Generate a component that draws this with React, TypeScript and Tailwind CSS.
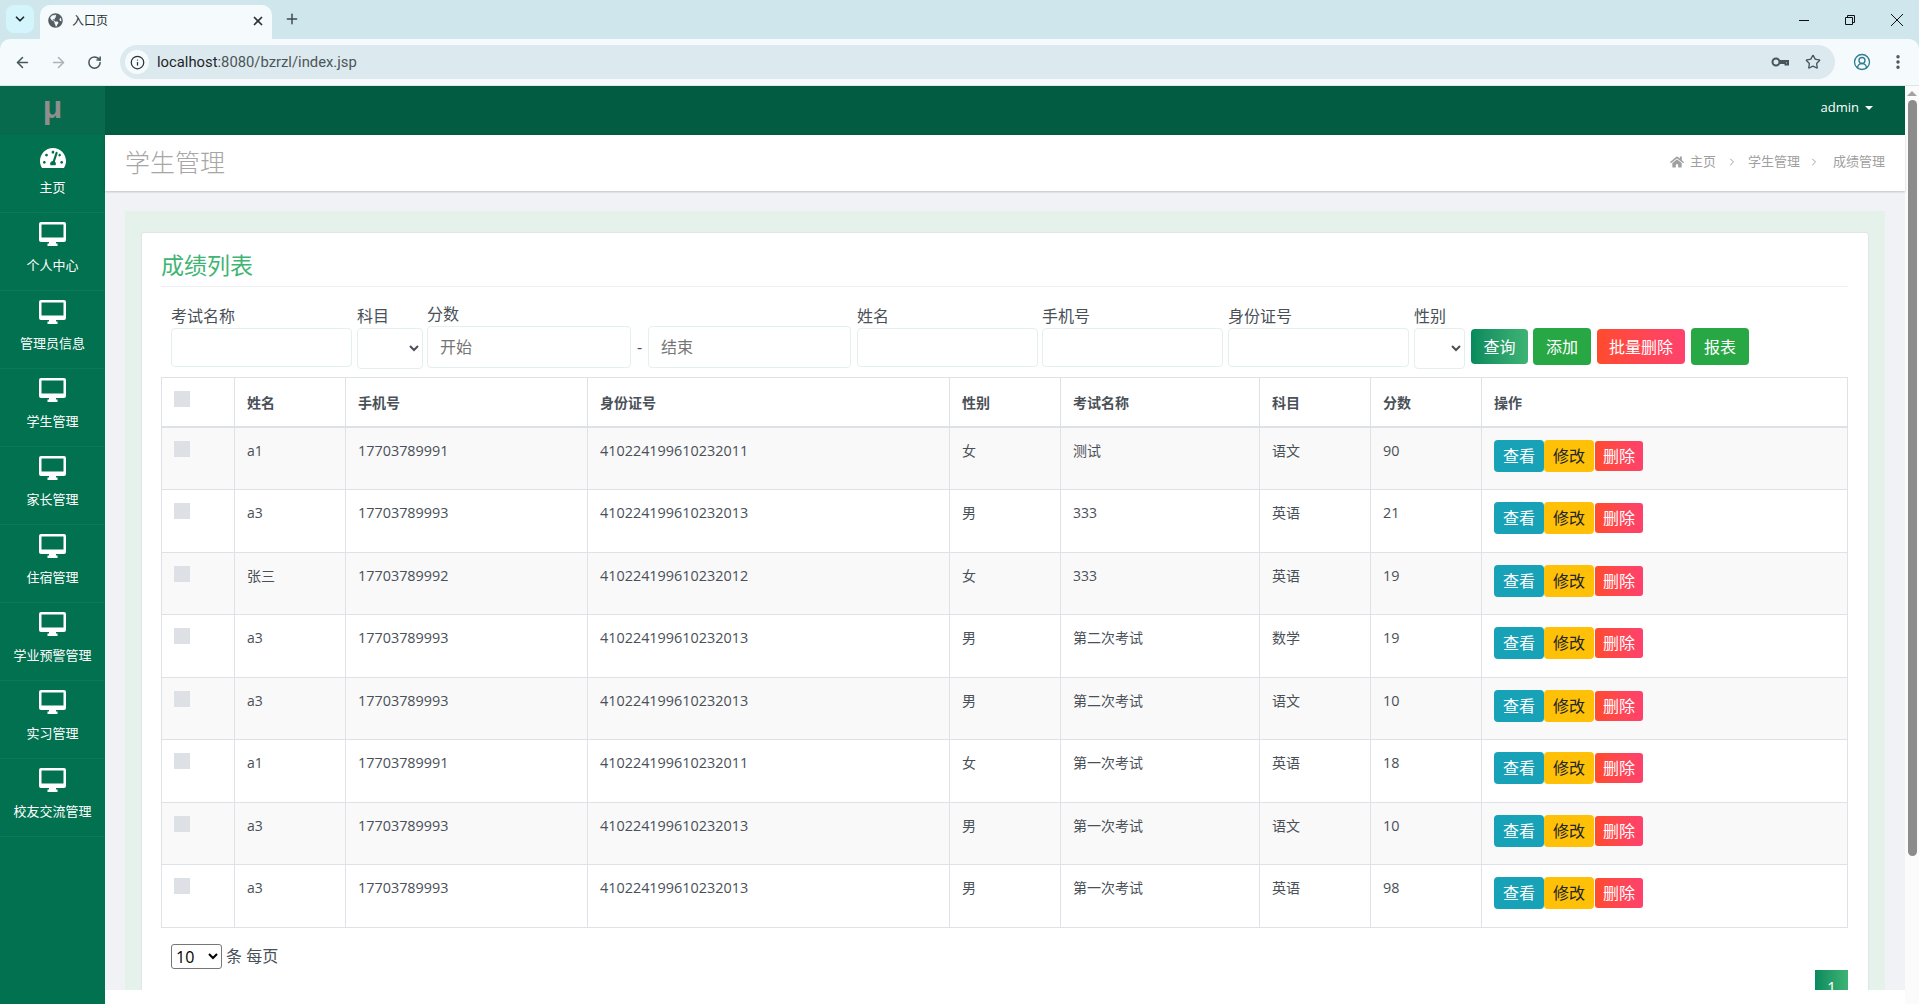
import { ArrowLeft, ArrowRight, RotateCw, Info, Star, CircleUserRound, EllipsisVertical, Plus, X, ChevronDown, ChevronRight } from "lucide-react";
import { FaTachometerAlt, FaHome, FaGlobeAmericas } from "react-icons/fa";

const menus = ["个人中心", "管理员信息", "学生管理", "家长管理", "住宿管理", "学业预警管理", "实习管理", "校友交流管理"];

const rows = [
  { name: "a1", phone: "17703789991", id: "410224199610232011", sex: "女", exam: "测试", subject: "语文", score: "90", h: "h-[63px]" },
  { name: "a3", phone: "17703789993", id: "410224199610232013", sex: "男", exam: "333", subject: "英语", score: "21", h: "h-[63px]" },
  { name: "张三", phone: "17703789992", id: "410224199610232012", sex: "女", exam: "333", subject: "英语", score: "19", h: "h-[62px]" },
  { name: "a3", phone: "17703789993", id: "410224199610232013", sex: "男", exam: "第二次考试", subject: "数学", score: "19", h: "h-[63px]" },
  { name: "a3", phone: "17703789993", id: "410224199610232013", sex: "男", exam: "第二次考试", subject: "语文", score: "10", h: "h-[62px]" },
  { name: "a1", phone: "17703789991", id: "410224199610232011", sex: "女", exam: "第一次考试", subject: "英语", score: "18", h: "h-[63px]" },
  { name: "a3", phone: "17703789993", id: "410224199610232013", sex: "男", exam: "第一次考试", subject: "语文", score: "10", h: "h-[62px]" },
  { name: "a3", phone: "17703789993", id: "410224199610232013", sex: "男", exam: "第一次考试", subject: "英语", score: "98", h: "h-[63px]" },
];

const headers = ["姓名", "手机号", "身份证号", "性别", "考试名称", "科目", "分数", "操作"];

function DesktopIcon() {
  return (
    <svg width="27" height="24" viewBox="0 0 27 24" fill="#fff" fillRule="evenodd">
      <path d="M2 0h23a2 2 0 0 1 2 2v16a2 2 0 0 1-2 2H2a2 2 0 0 1-2-2V2a2 2 0 0 1 2-2zM2.5 2.5v13h22v-13z" />
      <path d="M10 20h7v1.500h1.500V24h-10v-2.500H10z" />
    </svg>
  );
}

function KeyIcon() {
  return (
    <svg width="18" height="12" viewBox="0 0 18 12" fill="none" stroke="#46565c" strokeWidth="2">
      <circle cx="5" cy="6" r="3.500" />
      <path d="M8.500 5h8.500v3.500h-2.500v-1.500h-6" />
    </svg>
  );
}

function BrowserChrome() {
  return (
    <div className="h-[86px] shrink-0 bg-[#cfe7ec]">
      <div className="flex h-[39px] items-end pl-[6px]">
        <div className="mb-[6px] flex h-[28px] w-[28px] items-center justify-center rounded-[8px] bg-[#d4f5fb]">
          <ChevronDown size={14} strokeWidth={3} className="text-[#1f2a30]" />
        </div>
        <div className="ml-[6px] flex h-[34px] w-[232px] items-center rounded-t-[10px] bg-[#f5fbfd] pb-[3px] pl-[8px] pr-[7px]">
          <FaGlobeAmericas size={15} className="text-[#555f63]" />
          <span className="ml-[9px] flex-1 text-[12px] text-[#2b3235]">入口页</span>
          <X size={14} strokeWidth={3} className="text-[#2b3235]" />
        </div>
        <Plus size={16} strokeWidth={2.2} className="mb-[12px] ml-[12px] text-[#3d4a4f]" />
        <div className="mb-[11px] ml-auto flex items-center text-[#111]">
          <svg width="12" height="12" viewBox="0 0 12 12" stroke="currentColor" fill="none" className="mr-[34px]"><path d="M1 6.500h10" /></svg>
          <svg width="12" height="12" viewBox="0 0 12 12" stroke="currentColor" fill="none" className="mr-[33px]"><path d="M1.500 3.500h7v7h-7zM3.500 3.500v-2h7v7h-2" /></svg>
          <svg width="16" height="16" viewBox="0 0 16 16" stroke="currentColor" fill="none" className="mr-[14px]"><path d="M2 2l12 12M14 2L2 14" /></svg>
        </div>
      </div>
      <div className="flex h-[47px] items-center rounded-t-[10px] border-b border-[#dfe6e9] bg-[#f5fbfd] pl-[14px]">
        <ArrowLeft size={17} strokeWidth={2.2} className="text-[#46565c]" />
        <ArrowRight size={17} strokeWidth={2.2} className="ml-[19px] text-[#aab4b8]" />
        <RotateCw size={15} strokeWidth={2.4} className="ml-[20px] text-[#46565c]" />
        <div className="ml-[18px] flex h-[34px] w-[1715px] items-center rounded-full bg-[#dceaef] pl-[5px] pr-[14px]">
          <div className="flex h-[24px] w-[24px] items-center justify-center rounded-full bg-[#f5fbfd]">
            <Info size={15} strokeWidth={2} className="text-[#2b3235]" />
          </div>
          <span className="ml-[8px] flex-1 font-['Roboto',sans-serif] text-[14.8px] text-[#4c5559]">
            <span className="text-[#1f2629]">localhost</span>:8080/bzrzl/index.jsp
          </span>
          <KeyIcon />
          <Star size={16} strokeWidth={2} className="ml-[16px] text-[#46565c]" />
        </div>
        <CircleUserRound size={18} strokeWidth={1.8} className="ml-[18px] text-[#2f7c90]" />
        <EllipsisVertical size={18} strokeWidth={2.6} className="ml-[18px] text-[#46565c]" />
      </div>
    </div>
  );
}

function Sidebar() {
  return (
    <div className="w-[105px] shrink-0 bg-[#02714f]">
      <div className="flex h-[49px] items-center justify-center bg-[#076a4c] pb-[7px] font-['Liberation_Sans',sans-serif] text-[32px] font-bold text-[#8f8f8f]">μ</div>
      <div className="flex h-[78px] flex-col items-center border-b border-[#0b7856] pt-[10px] text-white">
        <FaTachometerAlt size={26} />
        <span className="mt-[7px] text-[13px] leading-[18px]">主页</span>
      </div>
      {menus.map((m) => (
        <div key={m} className="flex h-[78px] flex-col items-center border-b border-[#0b7856] pt-[9px] text-white">
          <DesktopIcon />
          <span className="mt-[10px] text-[13px] leading-[18px]">{m}</span>
        </div>
      ))}
    </div>
  );
}

function Field({ label, w, mb, ph, h }: { label: string; w: string; mb: string; ph?: string; h: string }) {
  return (
    <div className={`flex shrink-0 flex-col ${w} ${mb}`}>
      <label className="text-[16px] leading-[24px] text-[#495057]">{label}</label>
      <input
        placeholder={ph}
        className={`${h} w-full rounded-[4px] border border-[#e3f0ec] bg-white px-[12px] text-[16px] outline-none placeholder:text-[#757575]`}
      />
    </div>
  );
}

function SelectField({ label, w }: { label: string; w: string }) {
  return (
    <div className={`flex shrink-0 flex-col ${w}`}>
      <label className="text-[16px] leading-[24px] text-[#495057]">{label}</label>
      <select className="h-[41px] w-full rounded-[4px] border border-[#e3f0ec] bg-white text-[#495057]">
        <option></option>
      </select>
    </div>
  );
}

function SearchBar() {
  return (
    <div className="ml-[10px] mt-[15px] flex h-[67px] items-end">
      <Field label="考试名称" w="w-[181px]" mb="mb-[2px]" h="h-[39px]" />
      <div className="ml-[5px]"><SelectField label="科目" w="w-[66px]" /></div>
      <div className="ml-[4px]"><Field label="分数" w="w-[204px]" mb="mb-[1px]" ph="开始" h="h-[42px]" /></div>
      <span className="mb-[10px] w-[17px] text-center text-[16px] text-[#495057]">-</span>
      <Field label="" w="w-[203px]" mb="mb-[1px]" ph="结束" h="h-[42px]" />
      <div className="ml-[6px]"><Field label="姓名" w="w-[181px]" mb="mb-[2px]" h="h-[39px]" /></div>
      <div className="ml-[4px]"><Field label="手机号" w="w-[181px]" mb="mb-[2px]" h="h-[39px]" /></div>
      <div className="ml-[5px]"><Field label="身份证号" w="w-[181px]" mb="mb-[2px]" h="h-[39px]" /></div>
      <div className="ml-[5px]"><SelectField label="性别" w="w-[51px]" /></div>
      <button className="mb-[5px] ml-[6px] h-[35px] w-[57px] rounded-[4px] bg-gradient-to-r from-[#058a5e] to-[#3db474] text-[16px] text-white">查询</button>
      <button className="mb-[4px] ml-[5px] h-[37px] w-[58px] rounded-[4px] bg-[#28a745] text-[16px] text-white">添加</button>
      <button className="mb-[5px] ml-[6px] h-[35px] w-[88px] rounded-[4px] bg-gradient-to-r from-[#ff4b2b] to-[#ff416c] text-[16px] text-white">批量删除</button>
      <button className="mb-[4px] ml-[6px] h-[37px] w-[58px] rounded-[4px] bg-[#28a745] text-[16px] text-white">报表</button>
    </div>
  );
}

function ScoreTable() {
  const td = "border border-[#dee2e6] px-[12px] py-[12px] align-top text-[14px] leading-[21px] text-[#495057]";
  return (
    <table className="mt-[8px] w-[1687px] table-fixed border-collapse">
      <colgroup>
        <col className="w-[73px]" />
        <col className="w-[111px]" />
        <col className="w-[242px]" />
        <col className="w-[362px]" />
        <col className="w-[111px]" />
        <col className="w-[199px]" />
        <col className="w-[111px]" />
        <col className="w-[111px]" />
        <col />
      </colgroup>
      <thead>
        <tr className="h-[49px]">
          <th className="border border-b-2 border-[#dee2e6] px-[12px] pb-[12px] pt-[13px] align-top">
            <div className="h-[16px] w-[16px] bg-[#dde0e4]" />
          </th>
          {headers.map((h) => (
            <th key={h} className="border border-b-2 border-[#dee2e6] px-[12px] pb-[11px] pt-[13px] text-left align-middle text-[14px] font-bold text-[#495057]">{h}</th>
          ))}
        </tr>
      </thead>
      <tbody>
        {rows.map((r, i) => (
          <tr key={i} className={`${r.h} ${i % 2 === 0 ? "bg-[#f9f9f9]" : "bg-white"}`}>
            <td className={td}><div className="mt-[1px] h-[16px] w-[16px] bg-[#dde0e4]" /></td>
            <td className={td}>{r.name}</td>
            <td className={td}><span className="text-[14.4px]">{r.phone}</span></td>
            <td className={td}><span className="text-[14.4px]">{r.id}</span></td>
            <td className={td}>{r.sex}</td>
            <td className={td}>{r.exam}</td>
            <td className={td}>{r.subject}</td>
            <td className={td}><span className="text-[14.4px]">{r.score}</span></td>
            <td className="border border-[#dee2e6] px-[12px] py-[12px] align-top">
              <div className="flex items-center text-[16px]">
                <button className="h-[32px] w-[50px] rounded-[4px] bg-[#17a2b8] text-white">查看</button>
                <button className="h-[32px] w-[50px] rounded-[4px] bg-[#ffc107] text-[#212529]">修改</button>
                <button className="ml-[1px] h-[30px] w-[48px] rounded-[3px] bg-gradient-to-r from-[#ff4b2b] to-[#ff416c] text-white">删除</button>
              </div>
            </td>
          </tr>
        ))}
      </tbody>
    </table>
  );
}

export default function App() {
  return (
    <div className="flex h-[1004px] w-[1919px] flex-col overflow-hidden bg-white font-['Open_Sans','Noto_Sans_CJK_SC',sans-serif]">
      <BrowserChrome />
      <div className="flex min-h-0 flex-1">
        <Sidebar />
        <div className="flex w-[1800px] shrink-0 flex-col">
          <div className="flex h-[49px] shrink-0 items-center justify-end bg-[#015c41] pb-[5px] pr-[32px] text-[13px] font-medium text-white">
            admin
            <span className="ml-[6px] h-0 w-0 border-x-[4px] border-t-[4px] border-x-transparent border-t-white" />
          </div>
          <div className="relative z-10 flex h-[56px] shrink-0 items-center justify-between bg-white pl-[20px] pr-[20px] shadow-[0_1px_2px_rgba(0,0,0,0.2)]">
            <span className="text-[25px] font-light text-[#a6a6a6]">学生管理</span>
            <div className="flex items-center pb-[2px] text-[13px] text-[#a0a0a0]">
              <FaHome size={14} />
              <span className="ml-[6px]">主页</span>
              <ChevronRight size={12} className="mx-[10px]" />
              <span>学生管理</span>
              <ChevronRight size={12} className="ml-[8px] mr-[13px]" />
              <span>成绩管理</span>
            </div>
          </div>
          <div className="h-[799px] shrink-0 overflow-hidden bg-[#f0f2f6] pl-[20px] pr-[20px] pt-[20px]">
            <div className="h-[800px] bg-[#e5f2eb] px-[16px] pt-[21px]">
              <div className="h-[780px] rounded-t-[3px] border-l border-r border-t border-[#dfe6ea] bg-white pl-[19px] pr-[20px]">
                <div className="border-b border-[#eceef0] pb-[5px] pt-[16px] text-[23px] leading-[32px] text-[#3fb573]">成绩列表</div>
                <SearchBar />
                <ScoreTable />
                <div className="ml-[10px] mt-[15px] flex h-[26px] items-center text-[16px] text-[#495057]">
                  <select className="h-[25px] w-[51px] rounded-[3px] border border-[#767676] bg-white text-[16px] text-black">
                    <option>10</option>
                  </select>
                  <span className="ml-[4px]">条 每页</span>
                </div>
                <div className="mt-[1px] flex justify-end">
                  <div className="flex h-[36px] w-[33px] items-center justify-center bg-gradient-to-r from-[#058a5e] to-[#3db474] text-[16px] text-white">1</div>
                </div>
              </div>
            </div>
          </div>
        </div>
        <div className="flex w-[14px] shrink-0 flex-col items-center bg-[#fbfbfb] pt-[5px]">
          <span className="h-0 w-0 border-x-[5px] border-b-[5px] border-x-transparent border-b-[#a3a3a3]" />
          <div className="mt-[4px] h-[756px] w-[9px] rounded-full bg-[#8c8c8c]" />
        </div>
      </div>
    </div>
  );
}
